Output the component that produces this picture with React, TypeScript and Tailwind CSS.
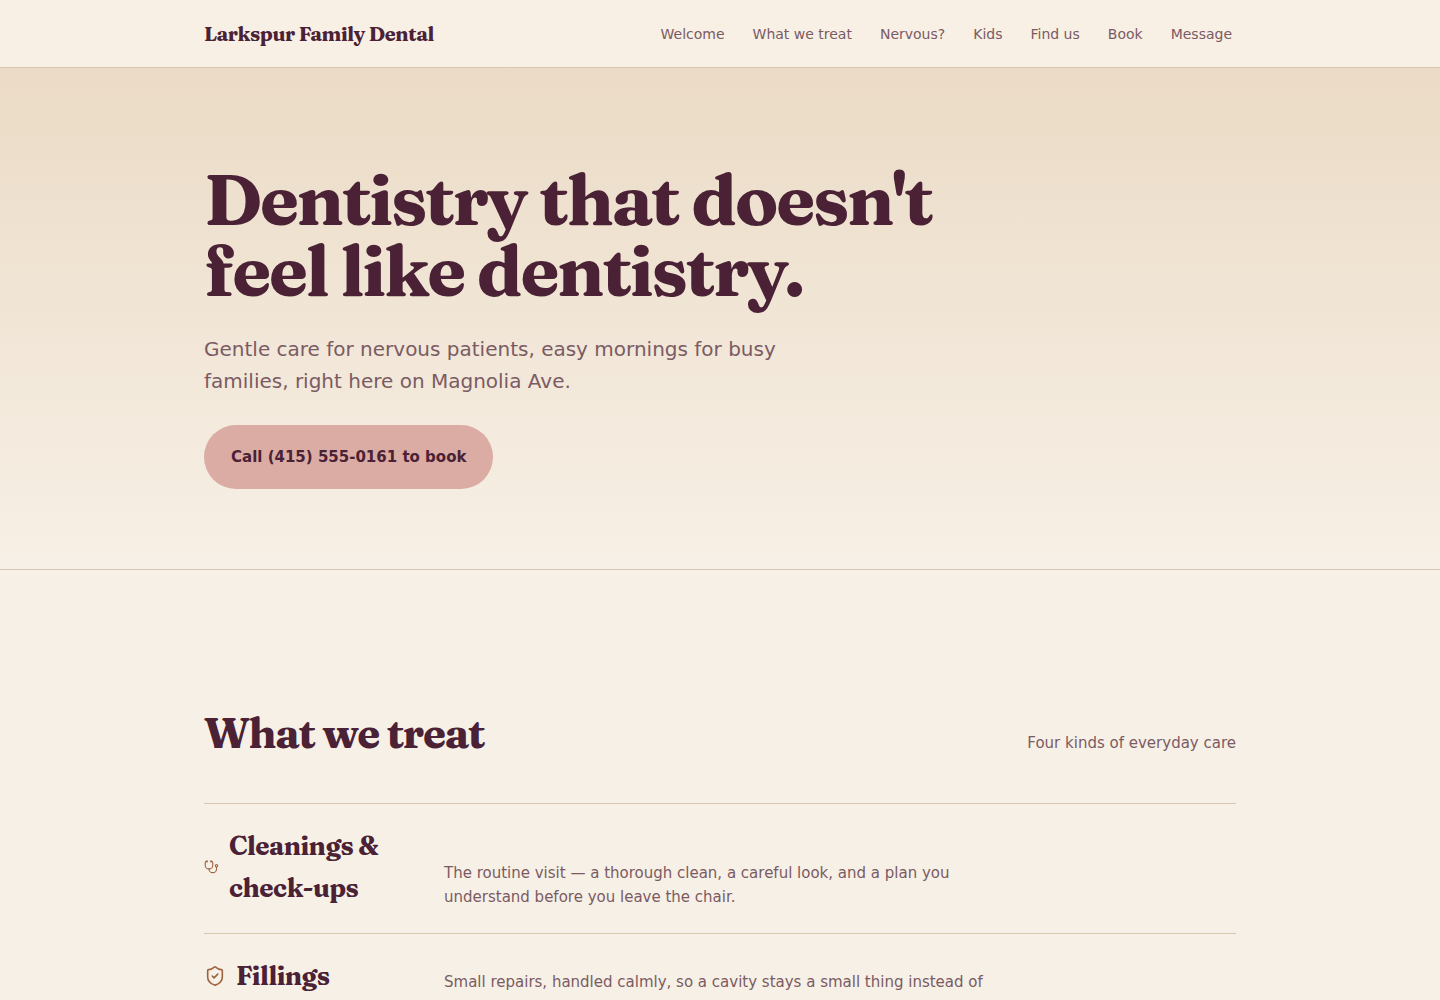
import { ShieldCheck, Stethoscope } from "lucide-react";

const navLinks = [
  { label: "Welcome", href: "#welcome" },
  { label: "What we treat", href: "#treat" },
  { label: "Nervous?", href: "#nervous" },
  { label: "Kids", href: "#kids" },
  { label: "Find us", href: "#find" },
  { label: "Book", href: "#book" },
  { label: "Message", href: "#message" },
];

const treatments = [
  {
    icon: Stethoscope,
    iconSize: "w-[15px]",
    title: "Cleanings & check-ups",
    text: "The routine visit — a thorough clean, a careful look, and a plan you understand before you leave the chair.",
  },
  {
    icon: ShieldCheck,
    iconSize: "w-[22px]",
    title: "Fillings",
    text: "Small repairs, handled calmly, so a cavity stays a small thing instead of",
  },
];

const Header = () => (
  <header className="border-b border-[#d9c8b0] bg-[#f8efe5]">
    <div className="mx-auto flex h-[67px] max-w-[1080px] items-center justify-between px-6">
      <a
        href="#welcome"
        className="font-['Fraunces','Liberation_Serif',serif] text-xl font-bold tracking-[-0.02em] text-[#4a2135]"
      >
        Larkspur Family Dental
      </a>
      <nav className="flex gap-7 pr-1 text-sm text-[#7b5b63]">
        {navLinks.map((link) => (
          <a key={link.label} href={link.href}>
            {link.label}
          </a>
        ))}
      </nav>
    </div>
  </header>
);

const Hero = () => (
  <section
    id="welcome"
    className="border-b border-[#d9c8b0] bg-linear-to-b from-[#ebdbc6] to-[#f7f0e6]"
  >
    <div className="mx-auto max-w-[1080px] px-6 pt-24 pb-20">
      <h1 className="max-w-[760px] font-['Fraunces','Liberation_Serif',serif] text-[71px] leading-[71px] font-bold tracking-[-0.03em] text-[#4a2135]">
        Dentistry that doesn't feel like dentistry.
      </h1>
      <p className="mt-[27px] max-w-[600px] text-xl leading-8 text-[#7b5b63]">
        Gentle care for nervous patients, easy mornings for busy families, right here on Magnolia Ave.
      </p>
      <a
        href="tel:+14155550161"
        className="mt-7 inline-flex h-16 items-center rounded-full bg-[#dbaca4] px-[27px] text-[15px] font-bold text-[#4a2135]"
      >
        Call (415) 555-0161 to book
      </a>
    </div>
  </section>
);

const Treatments = () => (
  <section id="treat" className="mx-auto max-w-[1080px] px-6 pt-32 pb-24">
    <div className="mb-[35px] flex items-baseline justify-between">
      <h2 className="font-['Fraunces','Liberation_Serif',serif] text-[42px] leading-[70px] font-bold tracking-[-0.03em] text-[#4a2135]">
        What we treat
      </h2>
      <p className="text-[15px] leading-6 text-[#7b5b63]">Four kinds of everyday care</p>
    </div>
    {treatments.map(({ icon: Icon, iconSize, title, text }) => (
      <div
        key={title}
        className="grid grid-cols-[200px_1fr] items-baseline gap-10 border-t border-[#d9c8b0] pt-[21px] pb-6"
      >
        <h3 className="flex items-center gap-[10px] font-['Fraunces','Liberation_Serif',serif] text-[26px] leading-[42px] font-bold tracking-[-0.02em] text-[#4a2135]">
          <Icon className={`h-[22px] shrink-0 text-[#a0623f] ${iconSize}`} strokeWidth={1.75} />
          <span>{title}</span>
        </h3>
        <p className="max-w-[580px] text-[15px] leading-6 text-[#7b5b63]">{text}</p>
      </div>
    ))}
  </section>
);

const App = () => (
  <div className="min-h-screen bg-[#f7f0e6] font-['DejaVu_Sans',sans-serif]">
    <Header />
    <main>
      <Hero />
      <Treatments />
    </main>
  </div>
);

export default App;
